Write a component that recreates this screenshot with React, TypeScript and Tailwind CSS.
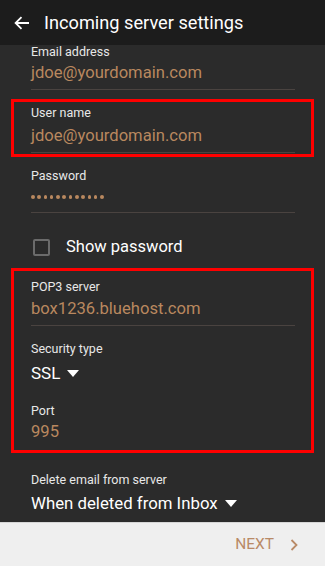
import React from 'react';

const font = { fontFamily: 'Roboto, "Noto Sans", sans-serif' };

function Label({ children }: { children: React.ReactNode }) {
  return <div className="text-[12.5px] leading-[16px] text-[#e8e8e8]">{children}</div>;
}

function Value({ children }: { children: React.ReactNode }) {
  return <div className="text-[16.6px] leading-[22px] text-[#b9885f]">{children}</div>;
}

function Line() {
  return <div className="h-px bg-[#4a4340]" />;
}

function Caret() {
  return (
    <svg width="12" height="8" viewBox="0 0 12 8" className="ml-[7px]">
      <path d="M0 0 H12 L6 7 Z" fill="#ffffff" />
    </svg>
  );
}

export default function App() {
  return (
    <div className="flex h-[566px] w-[325px] flex-col bg-[#2b2b2b]" style={font}>
      <header className="flex h-[45px] shrink-0 items-center bg-[#1c1c1c]">
        <svg width="16" height="14" viewBox="0 0 16 14" className="ml-[14px]">
          <path d="M15 7 H2 M7.5 1.2 L1.6 7 L7.5 12.8" fill="none" stroke="#ffffff" strokeWidth="1.8" />
        </svg>
        <h1 className="ml-[14px] text-[18.2px] text-white">Incoming server settings</h1>
      </header>

      <main className="flex-1 overflow-hidden px-[11px]">
        <div className="-mt-px ml-[20px] mr-[19px]">
          <Label>Email address</Label>
          <div className="mt-[2px]"><Value>jdoe@yourdomain.com</Value></div>
          <div className="mt-[5px]"><Line /></div>
        </div>

        <div className="mt-[9px] border-[3px] border-[#ff0000] pb-px pl-[17px] pr-[16px] pt-[3px]">
          <Label>User name</Label>
          <div className="mt-[4px]"><Value>jdoe@yourdomain.com</Value></div>
          <div className="mt-[5px]"><Line /></div>
        </div>

        <div className="ml-[20px] mr-[19px] mt-[11px]">
          <Label>Password</Label>
          <div className="mt-[2px] flex h-[22px] items-center gap-[2.8px]" aria-label="password">
            {Array.from({ length: 12 }).map((_, i) => (
              <span key={i} className="h-[3.5px] w-[3.5px] rounded-full bg-[#b9885f]" />
            ))}
          </div>
          <div className="mt-[4px]"><Line /></div>
        </div>

        <label className="ml-[22px] mt-[22px] flex h-[24px] items-center">
          <span className="h-[17px] w-[17px] rounded-[2px] border-2 border-[#6b6b6b]" />
          <span className="ml-[16px] text-[16.5px] text-white">Show password</span>
        </label>

        <div className="mt-[9px] border-[3px] border-[#ff0000] pb-[7px] pl-[17px] pr-[16px] pt-[8px]">
          <Label>POP3 server</Label>
          <div className="mt-[3px]"><Value>box1236.bluehost.com</Value></div>
          <div className="mt-[5px]"><Line /></div>

          <div className="mt-[15px]"><Label>Security type</Label></div>
          <div className="mt-[5px] flex h-[24px] items-center text-[17px] text-white">
            SSL <Caret />
          </div>

          <div className="mt-[17px]"><Label>Port</Label></div>
          <div className="mt-[2px]"><Value>995</Value></div>
        </div>

        <div className="ml-[20px] mt-[19px]">
          <Label>Delete email from server</Label>
          <div className="mt-[4px] flex h-[24px] items-center text-[16.8px] text-white">
            When deleted from Inbox <Caret />
          </div>
        </div>
      </main>

      <footer className="flex h-[44px] shrink-0 items-center justify-end border-t border-[#d6d6d6] bg-[#efefef] pr-[27px]">
        <span className="text-[15.5px] text-[#b98a67]">NEXT</span>
        <svg width="8" height="12" viewBox="0 0 8 12" className="ml-[16px]">
          <path d="M1.5 1 L6.5 6 L1.5 11" fill="none" stroke="#b98a67" strokeWidth="1.8" />
        </svg>
      </footer>
    </div>
  );
}
